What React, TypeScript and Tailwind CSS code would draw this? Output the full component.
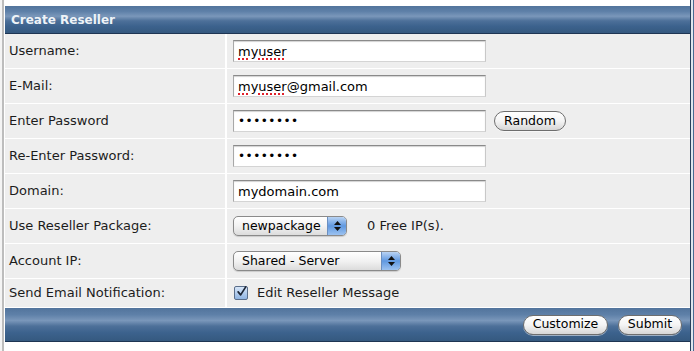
import React from "react";

const font = { fontFamily: '"DejaVu Sans", Verdana, sans-serif' };

function TextBox({ children }: { children: React.ReactNode }) {
  return (
    <div className="w-[253px] h-[22px] bg-white border border-t-[#8a8a8a] border-l-[#a8a8a8] border-r-[#c8c8c8] border-b-[#d4d4d4] shadow-[inset_0_1px_1px_rgba(0,0,0,0.18)] flex items-center pl-[4px] text-[13px] text-black leading-none">
      {children}
    </div>
  );
}

function Squiggle({ children }: { children: React.ReactNode }) {
  return (
    <span className="underline decoration-dotted decoration-[#e0202a] decoration-2 underline-offset-[3px]">
      {children}
    </span>
  );
}

function Pill({ children, w }: { children: React.ReactNode; w: string }) {
  return (
    <div
      className={`${w} h-[20px] rounded-full border border-[#6e6e6e] bg-gradient-to-b from-white via-[#f4f4f4] to-[#d6d6d6] flex items-center justify-center text-[12.5px] text-black shadow-[0_1px_0_rgba(255,255,255,0.5)]`}
    >
      {children}
    </div>
  );
}

function Select({ label, w }: { label: string; w: string }) {
  return (
    <div
      className={`${w} h-[20px] rounded-[5px] border border-[#8a8a8a] bg-gradient-to-b from-white via-[#f2f2f2] to-[#dcdcdc] flex items-center overflow-hidden shadow-[0_1px_1px_rgba(0,0,0,0.15)]`}
    >
      <div className="flex-1 pl-[8px] text-[12.5px] text-black leading-none">{label}</div>
      <div className="w-[19px] h-full bg-gradient-to-b from-[#b9d3f3] via-[#5f98e0] to-[#9cc2f0] border-l border-[#6b8fc0] flex flex-col items-center justify-center gap-[2px]">
        <svg width="7" height="4" viewBox="0 0 7 4"><path d="M3.5 0 L7 4 L0 4 Z" fill="#111" /></svg>
        <svg width="7" height="4" viewBox="0 0 7 4"><path d="M0 0 L7 0 L3.5 4 Z" fill="#111" /></svg>
      </div>
    </div>
  );
}

function Row({ label, children, h = "h-[35px]" }: { label: string; children: React.ReactNode; h?: string }) {
  return (
    <div className={`flex ${h} border-b border-white`}>
      <div className="w-[222px] bg-[#eeeeee] flex items-center pl-[4px] text-[13px] text-[#1c1c1c] border-r-2 border-white">
        {label}
      </div>
      <div className="flex-1 bg-[#eeeeee] flex items-center pl-[6px] gap-[8px]">{children}</div>
    </div>
  );
}

const bar =
  "bg-[linear-gradient(to_bottom,#52749c_0%,#5e80a8_20%,#7a97ba_38%,#4d7099_55%,#3c628d_75%,#35597f_100%)]";

export default function App() {
  const dots = "••••••••";
  return (
    <div className="w-[694px] h-[351px] bg-white flex" style={font}>
      <div className="w-[5px] h-full flex">
        <div className="w-[2px] bg-[#f4f4f4]" />
        <div className="w-[2px] bg-[#bdbdbd]" />
        <div className="w-[1px] bg-white" />
      </div>
      <div className="w-[685px] flex flex-col pt-[6px]">
        <div className={`h-[28px] ${bar} border-b border-[#1e3553] flex items-center pl-[6px]`}>
          <span className="text-[12px] font-bold text-[#eef3f8]">Create Reseller</span>
        </div>
        <Row label="Username:">
          <TextBox>
            <Squiggle>myuser</Squiggle>
          </TextBox>
        </Row>
        <Row label="E-Mail:">
          <TextBox>
            <Squiggle>myuser</Squiggle>@gmail.com
          </TextBox>
        </Row>
        <Row label="Enter Password">
          <TextBox>
            <span className="tracking-[0.5px] text-[12px]">{dots}</span>
          </TextBox>
          <Pill w="w-[72px]">Random</Pill>
        </Row>
        <Row label="Re-Enter Password:">
          <TextBox>
            <span className="tracking-[0.5px] text-[12px]">{dots}</span>
          </TextBox>
        </Row>
        <Row label="Domain:">
          <TextBox>mydomain.com</TextBox>
        </Row>
        <Row label="Use Reseller Package:">
          <Select label="newpackage" w="w-[114px]" />
          <span className="ml-[12px] text-[13px] text-[#1c1c1c]">0 Free IP(s).</span>
        </Row>
        <Row label="Account IP:">
          <Select label="Shared - Server" w="w-[168px]" />
        </Row>
        <Row label="Send Email Notification:" h="h-[29px]">
          <div className="flex items-center gap-[9px]">
            <div className="w-[14px] h-[14px] ml-[1px] rounded-[2px] border border-[#5a6e8a] bg-gradient-to-b from-[#d7e6f8] to-[#8fb4e2] flex items-center justify-center">
              <svg width="13" height="13" viewBox="0 0 13 13" className="-mt-[3px] ml-[1px]">
                <path d="M2.5 7 L5.5 10.5 L11.5 1" stroke="#1b2433" strokeWidth="2" fill="none" strokeLinecap="round" strokeLinejoin="round" />
              </svg>
            </div>
            <span className="text-[13px] text-[#1c1c1c]">Edit Reseller Message</span>
          </div>
        </Row>
        <div className={`h-[34px] ${bar} border-b border-[#1e3553] flex items-center justify-end pr-[8px] gap-[10px]`}>
          <Pill w="w-[85px]">Customize</Pill>
          <Pill w="w-[64px]">Submit</Pill>
        </div>
      </div>
      <div className="w-[4px] h-full flex">
        <div className="w-[1px] bg-[#2a3f5c]" />
        <div className="w-[2px] bg-[#dfe6ee]" />
        <div className="w-[1px] bg-[#4a6a92]" />
      </div>
    </div>
  );
}
